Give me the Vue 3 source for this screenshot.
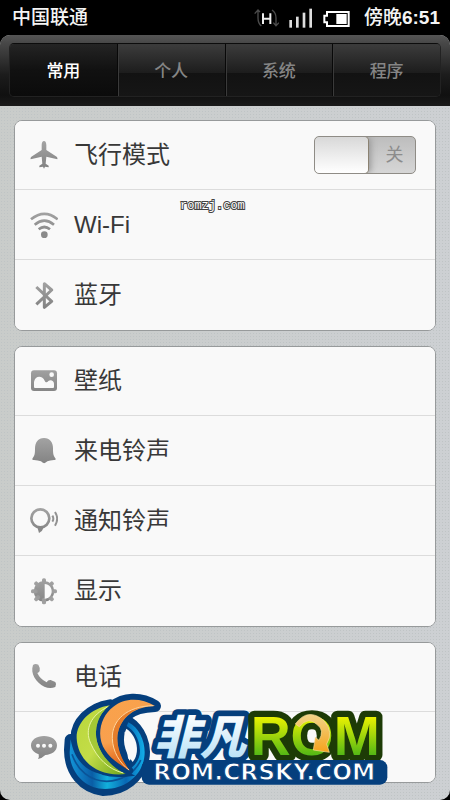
<script setup>
import { ref } from 'vue'

const tabs = ['常用', '个人', '系统', '程序']
const active = ref('常用')
const airplane = ref(false)

const groups = [
  [
    { label: '飞行模式', icon: 'plane', toggle: true },
    { label: 'Wi-Fi', icon: 'wifi' },
    { label: '蓝牙', icon: 'bluetooth' }
  ],
  [
    { label: '壁纸', icon: 'picture' },
    { label: '来电铃声', icon: 'bell' },
    { label: '通知铃声', icon: 'notice' },
    { label: '显示', icon: 'display' }
  ],
  [
    { label: '电话', icon: 'phone' },
    { label: '', name: '信息', icon: 'chat' }
  ]
]
const teeth = [0, 45, 90, 135, 180, 225, 270, 315]
</script>

<template>
  <div class="screen">
    <header class="status">
      <span class="carrier">中国联通</span>
      <svg class="net" viewBox="0 0 75 60" aria-hidden="true">
        <g fill="none" stroke="#4c4c4c" stroke-width="4">
          <path d="M12 6V30Q12 46 22 54M2 17L12 6L18 12" />
          <path d="M54 6Q66 14 66 30V52M58 44L66 53L75 44" />
        </g>
        <path d="M27 16V48M49 16V48M27 32H49" fill="none" stroke="#eee" stroke-width="6" />
      </svg>
      <svg class="signal" viewBox="0 0 72 60" aria-hidden="true">
        <g fill="#ddd">
          <rect x="1" y="36" width="8" height="23" />
          <rect x="21" y="26" width="8" height="33" />
          <rect x="41" y="14" width="8" height="45" />
          <rect x="61" y="2" width="8" height="57" />
        </g>
      </svg>
      <svg class="battery" viewBox="0 0 81 48" aria-hidden="true">
        <path d="M12 3H77V45H12V34H4V14H12Z" fill="none" stroke="#fff" stroke-width="6" />
        <rect x="40" y="9" width="31" height="30" fill="#fff" />
      </svg>
      <span class="clock"><span class="part">傍晚</span>6:51</span>
    </header>

    <div class="panel">
      <nav class="bar">
        <div class="tabs" role="tablist">
          <button
            v-for="t in tabs"
            :key="t"
            type="button"
            role="tab"
            class="tab"
            :class="{ on: t === active }"
            :aria-selected="t === active"
            @click="active = t"
          >{{ t }}</button>
        </div>
      </nav>

      <main class="groups">
        <section v-for="(g, i) in groups" :key="i" class="card">
          <component
            :is="item.toggle ? 'div' : 'button'"
            v-for="item in g"
            :key="item.icon"
            class="row"
            :aria-label="item.name"
          >
            <svg class="icon" viewBox="0 0 84 84" aria-hidden="true">
              <defs>
                <linearGradient :id="'g-' + item.icon" x1="0" y1="0" x2="0" y2="84" gradientUnits="userSpaceOnUse">
                  <stop offset="0" stop-color="#a4a4a4" />
                  <stop offset="1" stop-color="#818181" />
                </linearGradient>
              </defs>
              <g v-if="item.icon === 'plane'" :fill="`url(#g-${item.icon})`">
                <path d="M42 0C46 0 49 5 49 12V27L80 47Q84 50 82 55L49 47L47 68L56 74V79L45 77L42 83L39 77L28 79V74L37 68L35 47L2 55Q0 50 4 47L35 27V12C35 5 38 0 42 0Z" />
              </g>
              <g v-else-if="item.icon === 'wifi'" fill="none" :stroke="`url(#g-${item.icon})`" stroke-width="8">
                <path d="M3 25Q43 -8 83 25" />
                <path d="M14 41Q43 17 72 41" />
                <path d="M26 55Q43 41 60 55" />
                <circle cx="43" cy="71" r="10" fill="#8a8a8a" stroke="none" />
              </g>
              <g v-else-if="item.icon === 'bluetooth'" fill="none" :stroke="`url(#g-${item.icon})`" stroke-width="9" stroke-linejoin="round">
                <path d="M19 18L65 61L43 79V8L65 27L19 70" />
              </g>
              <g v-else-if="item.icon === 'picture'">
                <rect x="3" y="10" width="78" height="62" rx="9" :fill="`url(#g-${item.icon})`" />
                <path d="M12 60V45C15 24 38 25 44 41C47 47 51 47 55 42C62 37 72 41 72 50V60Q72 63 69 63H15Q12 63 12 60Z" fill="#f9f9f9" />
                <circle cx="65" cy="23" r="7" fill="#f9f9f9" />
              </g>
              <g v-else-if="item.icon === 'bell'" :fill="`url(#g-${item.icon})`">
                <path d="M42 3C60 3 69 16 69 34C69 52 70 56 77 65Q78 70 72 69Q60 70 52 73Q42 84 33 73Q24 70 12 69Q6 70 7 65C14 56 15 52 15 34C15 16 24 3 42 3Z" />
              </g>
              <g v-else-if="item.icon === 'notice'">
                <ellipse cx="31" cy="34" rx="27" ry="27" fill="none" :stroke="`url(#g-${item.icon})`" stroke-width="8" />
                <path d="M21 58L27 78Q38 72 42 60Z" fill="#888" />
                <path d="M67 26Q73 35 67 44M75 15Q88 35 75 56" fill="none" stroke="#929292" stroke-width="6" />
              </g>
              <g v-else-if="item.icon === 'display'">
                <g :fill="`url(#g-${item.icon})`">
                  <circle cx="42" cy="43" r="31" />
                  <rect v-for="a in teeth" :key="a" x="36" y="4" width="12" height="20" rx="5" :transform="`rotate(${a} 42 43)`" />
                </g>
                <path d="M44 21C72 22 72 64 44 65Z" fill="#f9f9f9" />
              </g>
              <g v-else-if="item.icon === 'phone'" :fill="`url(#g-${item.icon})`">
                <path d="M9 6Q16 0 25 5Q31 14 29 24Q27 29 22 30Q30 48 50 58Q54 50 62 51L76 57Q81 64 76 72Q60 79 43 71C18 59 0 32 9 6Z" />
              </g>
              <g v-else>
                <path d="M42 9C64 9 81 20 81 37C81 55 66 65 46 66Q36 76 24 78Q28 72 26 64C12 59 3 50 3 37C3 20 20 9 42 9Z" :fill="`url(#g-${item.icon})`" />
                <circle cx="24" cy="38" r="6" fill="#f9f9f9" />
                <circle cx="42" cy="38" r="6" fill="#f9f9f9" />
                <circle cx="61" cy="38" r="6" fill="#f9f9f9" />
              </g>
            </svg>
            <span class="label">{{ item.label }}</span>
            <label v-if="item.toggle" class="switch">
              <input v-model="airplane" type="checkbox" role="switch" :aria-label="item.label" />
              <span class="knob"></span>
              <span class="state">关</span>
            </label>
          </component>
        </section>
      </main>
    </div>

    <span class="mark">romzj.com</span>

    <svg class="logo" viewBox="0 0 990 330" role="img" aria-label="非凡ROM ROM.CRSKY.COM">
      <defs>
        <linearGradient id="leaf" x1="0" y1="0" x2="1" y2="1">
          <stop offset="0" stop-color="#b9d63a" />
          <stop offset="0.5" stop-color="#c3dd48" />
          <stop offset="1" stop-color="#6fa51c" />
        </linearGradient>
        <linearGradient id="flame" x1="0.3" y1="0" x2="0.5" y2="1">
          <stop offset="0" stop-color="#f9a24c" />
          <stop offset="0.55" stop-color="#f8a04e" />
          <stop offset="1" stop-color="#d9540a" />
        </linearGradient>
        <linearGradient id="sea" x1="0" y1="0" x2="1" y2="0">
          <stop offset="0" stop-color="#1295d8" />
          <stop offset="0.3" stop-color="#0a5da6" />
          <stop offset="0.5" stop-color="#12b0dc" />
          <stop offset="0.75" stop-color="#0868b4" />
          <stop offset="1" stop-color="#12aee8" />
        </linearGradient>
        <linearGradient id="ice" x1="0" y1="70" x2="0" y2="205" gradientUnits="userSpaceOnUse">
          <stop offset="0" stop-color="#fff" />
          <stop offset="1" stop-color="#b9e2f7" />
        </linearGradient>
        <linearGradient id="lime" x1="0" y1="75" x2="0" y2="195" gradientUnits="userSpaceOnUse">
          <stop offset="0" stop-color="#f2f500" />
          <stop offset="1" stop-color="#54b815" />
        </linearGradient>
        <linearGradient id="gold" x1="0" y1="0" x2="0" y2="1">
          <stop offset="0" stop-color="#f2d488" />
          <stop offset="1" stop-color="#f5a31c" />
        </linearGradient>
      </defs>
      <g fill="#053f7d" stroke="#053f7d" stroke-width="36" stroke-linejoin="round">
        <path d="M150 46C90 55 48 100 50 145C52 205 105 262 200 250C140 225 105 170 108 125C110 90 125 65 150 46Z" />
        <path d="M285 48C240 20 190 25 160 50C120 80 105 140 135 180C150 205 180 225 210 242C185 215 165 180 168 130C172 90 205 50 285 48Z" />
        <path d="M205 97C240 120 258 165 250 205C240 260 190 300 130 300C70 292 30 245 30 180L32 150C50 220 80 268 140 268C200 265 238 220 236 180C234 145 220 120 200 108Z" />
      </g>
      <path d="M60 110L110 40L190 100L210 250L110 275L50 210Z" fill="#053f7d" />
      <path d="M205 97C236 112 254 150 254 187C254 250 200 297 135 297C74 297 29 245 29 187L32 148C42 212 84 252 140 254C205 254 240 222 240 182C238 145 222 122 200 108Z" fill="url(#sea)" />
      <path d="M36 193C52 240 90 274 140 274C185 273 226 248 242 210" fill="none" stroke="#0a5498" stroke-width="5" />
      <path d="M199 116C186 142 190 182 218 216C240 190 234 140 199 116Z" fill="#f9f9f9" />
      <path d="M150 46C90 55 48 100 50 145C52 205 105 262 197 252C140 225 105 170 108 125C110 90 125 65 150 46Z" fill="url(#leaf)" stroke="#053f7d" stroke-width="16" paint-order="stroke" />
      <path d="M145 50C92 75 73 118 92 160C112 205 145 238 190 249C138 222 105 170 108 125C110 90 125 65 145 50Z" fill="#94bf2e" opacity="0.65" />
      <path d="M145 50C92 75 73 118 92 160C112 205 145 238 190 249" fill="none" stroke="#e9f4a4" stroke-width="3" />
      <path d="M285 48C240 20 190 25 160 50C120 80 108 140 135 180C150 205 180 225 210 242C188 215 172 180 172 145C174 92 215 50 285 48Z" fill="url(#flame)" stroke="#053f7d" stroke-width="20" stroke-linejoin="round" paint-order="stroke" />
      <path d="M278 47C200 48 155 92 157 145C158 185 180 220 207 240C188 215 172 180 172 145C174 92 215 50 278 47Z" fill="#dc6b19" opacity="0.65" />
      <path d="M280 47C200 48 155 92 157 145C158 185 180 220 207 240" fill="none" stroke="#fdd5a0" stroke-width="3" />
      <text class="name" x="281" y="191" stroke="#053f7d" fill="url(#ice)">非凡</text>
      <text class="rom" x="572" y="194" stroke="#1d3b06" fill="url(#lime)">ROM</text>
      <path d="M706 102Q744 50 792 92Q822 126 800 162L808 187L760 180L766 142L777 151Q794 121 773 105Q745 77 718 110Z" fill="url(#gold)" stroke="#f8dc9c" stroke-width="2" />
      <rect x="245" y="210" width="737" height="74" rx="22" fill="#053f7d" />
      <text class="site" x="280" y="270" fill="#fff" stroke="#053f7d">ROM.CRSKY.COM</text>
    </svg>
  </div>
</template>

<style>
body {
  background: #000;
}
</style>

<style scoped>
.screen {
  position: relative;
  min-height: 100vh;
  background: #000;
  font-family: "Liberation Sans", "Noto Sans CJK SC", sans-serif;
}
.status {
  display: flex;
  align-items: center;
  height: 35px;
  padding: 0 10px 0 12px;
  color: #f4f4f4;
  font-size: 19px;
  line-height: 35px;
}
.carrier {
  flex: 1;
  font-weight: 500;
}
.net {
  width: 25px;
  height: 20px;
}
.signal {
  width: 24px;
  height: 20px;
  margin-left: 10px;
}
.battery {
  width: 27px;
  height: 16px;
  margin: 2px 14px 0 10px;
}
.clock {
  font-weight: 700;
}
.part {
  font-weight: 500;
}
.panel {
  border-radius: 10px;
  overflow: hidden;
  background-color: #cbcfd0;
  background-image:
    radial-gradient(#bfc4c5 1px, transparent 1px),
    linear-gradient(90deg, #c9ccca, #cdd0d3);
  background-size: 3px 3px, 100% 100%;
}
.bar {
  padding: 8px 9px;
  height: 71px;
  box-sizing: border-box;
  background: linear-gradient(#555 0, #484848 8px, #1c1c1c 40px, #101010 60px, #1a1a1a);
}
.tabs {
  display: flex;
  height: 54px;
  box-sizing: border-box;
  border: 1px solid #222;
  border-top-color: #0c0c0c;
  border-radius: 5px;
  overflow: hidden;
}
.tab {
  flex: 1;
  padding: 0;
  border: 0;
  border-left: 1px solid #080808;
  box-shadow: inset 1px 1px 0 #3a3a3a;
  background: linear-gradient(#3c3c3c, #1d1d1d 55%, #121212 56%, #161616);
  color: #858585;
  font: 500 17px/50px "Noto Sans CJK SC", sans-serif;
}
.tab.on {
  border-left: 0;
  box-shadow: none;
  background: linear-gradient(#242424, #111 50%, #0b0b0b);
  color: #fff;
}
.groups {
  display: flex;
  flex-direction: column;
  gap: 15px;
  padding: 14px 14px 17px;
}
.card {
  border: 1px solid #979a9b;
  border-radius: 8px;
  overflow: hidden;
  background: #f9f9f9;
}
.row {
  display: flex;
  align-items: center;
  gap: 16px;
  width: 100%;
  height: 70px;
  box-sizing: border-box;
  padding: 0 19px 0 15px;
  border: 0;
  border-bottom: 1px solid #dcdcdc;
  background: #f9f9f9;
  color: #383838;
  font: 400 24px/34px "Liberation Sans", "Noto Sans CJK SC", sans-serif;
  text-align: left;
}
.row:first-child {
  height: 69px;
}
.row:last-child {
  border-bottom: 0;
}
.icon {
  flex: none;
  width: 28px;
  height: 28px;
}
.label {
  flex: 1;
}
.switch {
  display: flex;
  align-items: center;
  width: 102px;
  height: 38px;
  box-sizing: border-box;
  border: 1px solid #8f8c86;
  border-radius: 5px;
  overflow: hidden;
  background: linear-gradient(#bdbdbd, #cacaca 50%, #d6d6d6);
}
.switch input {
  position: absolute;
  opacity: 0;
}
.knob {
  width: 53px;
  height: 36px;
  border-radius: 4px;
  background: linear-gradient(#d8d8d8, #f0f0f0 60%, #fff);
  box-shadow: 0 0 0 1px #8b8272, 3px 0 6px #999;
}
.state {
  flex: 1;
  padding-left: 6px;
  color: #8c8c8c;
  font-size: 18px;
  text-align: center;
}
.mark {
  position: absolute;
  top: 198px;
  left: 180px;
  color: #fff;
  font: 400 12px/16px "Liberation Mono", monospace;
  -webkit-text-stroke: 2px #444;
  paint-order: stroke fill;
}
.logo {
  position: absolute;
  top: 690px;
  left: 60px;
  width: 330px;
  height: 110px;
}
.name,
.rom {
  paint-order: stroke fill;
  stroke-linejoin: round;
}
.name {
  font: italic 900 138px "Noto Sans CJK SC", sans-serif;
  stroke-width: 34px;
}
.rom {
  font: 700 166px "Liberation Sans", sans-serif;
  stroke-width: 38px;
}
.site {
  font: 700 70px "DejaVu Sans", sans-serif;
  stroke-width: 3px;
}
</style>
